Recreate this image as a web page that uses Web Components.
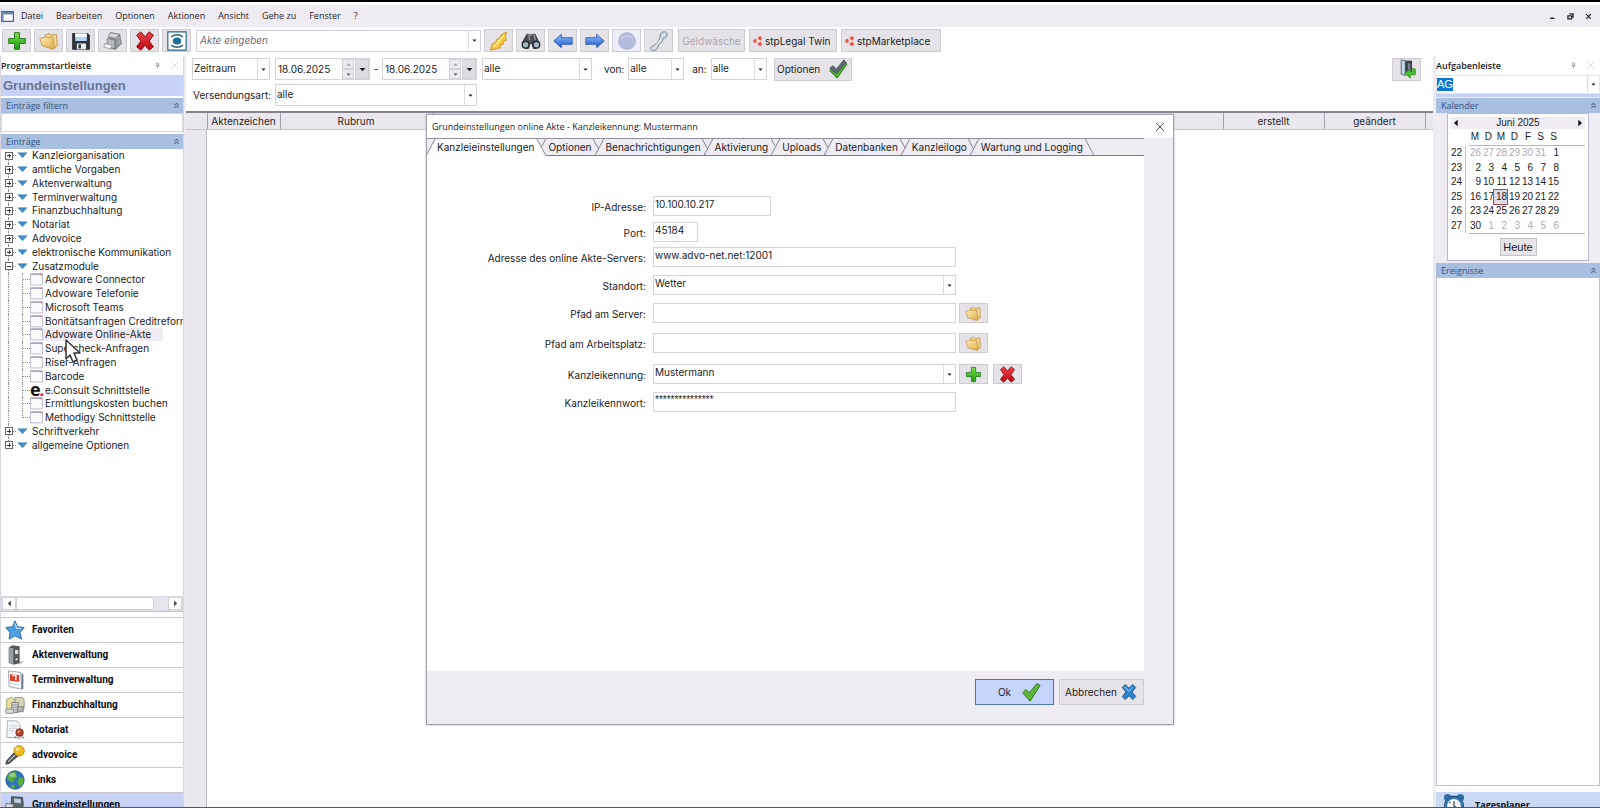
<!DOCTYPE html>
<html lang="de">
<head>
<meta charset="utf-8">
<title>Advoware – Grundeinstellungen</title>
<style>
  html, body { margin: 0; height: 100%; overflow: hidden; }
  body { font: 10px/14px Inter, "Liberation Sans", sans-serif; color: #1c1c24; background: #fff; }
</style>
</head>
<body>
<app-window></app-window>

<script>
const BASE = `
  *, *::before, *::after { box-sizing: border-box; }
  button, input, select { font: inherit; color: inherit; margin: 0; padding: 0; border-radius: 0; outline: 0; }
  button { cursor: pointer; }
`;

const define = (name, css, html, setup) => {
  customElements.define(name, class extends HTMLElement {
    constructor() {
      super();
      this.attachShadow({ mode: 'open' });
    }
    connectedCallback() {
      if (this.shadowRoot.firstChild) return;
      const t = document.createElement('template');
      t.innerHTML = `<style>${BASE}${css}</style>` + (typeof html === 'function' ? html(this) : html);
      this.shadowRoot.append(t.content.cloneNode(true));
      if (setup) setup(this, this.shadowRoot);
    }
  });
};

/* ---------- icons (24 x 24 grid) ---------- */
const ICONS = {
  plus: `<defs><linearGradient id="g" x2="0" y2="1"><stop stop-color="#7be04a"/><stop offset="1" stop-color="#1d9a12"/></linearGradient></defs><path d="M9 2h6v7h7v6h-7v7H9v-7H2V9h7z" fill="url(#g)" stroke="#2f7d22" stroke-width="1.2" stroke-linejoin="round"/>`,
  folder: `<defs><linearGradient id="g" x2="1" y2="1"><stop stop-color="#fff0b8"/><stop offset="1" stop-color="#e0a940"/></linearGradient></defs><path d="M7 5l5-2 3 2 6-1 1 14-6 3z" fill="#f3d58c" stroke="#b58a3c" stroke-width=".9"/><path d="M1 9l8-2 2 1 5-1 3 13-2 2-13-4z" fill="url(#g)" stroke="#b58a3c" stroke-width=".9" stroke-linejoin="round"/>`,
  save: `<path d="M2 3h18l2 2v17H2z" fill="#2f333b" stroke="#1d2026"/><path d="M5 3h14v9H5z" fill="#b9d3ee"/><path d="M5 3h14v4H5z" fill="#f8fbff"/><path d="M7 15h11v7H7z" fill="#e9ebef"/><path d="M9 16h3v5H9z" fill="#30343c"/>`,
  printer: `<path d="M9 2l11 2 2 11-7 7-5-1V10L7 8z" fill="#8b8e92" stroke="#55585c" stroke-width=".8"/><path d="M9 2l11 2-5 5-9-2z" fill="#d4d6d9" stroke="#6a6d70" stroke-width=".7"/><path d="M5 9l9 2v10l-9-2z" fill="#b9bcc0" stroke="#65686c" stroke-width=".7"/><path d="M2 15l9 2-2 5-8-3z" fill="#f4f4f4" stroke="#777" stroke-width=".7"/><path d="M17 10l3-3m-3 7l4-4m-4 7l4-4" stroke="#ddd"/>`,
  cross: `<defs><linearGradient id="g" x2="0" y2="1"><stop stop-color="#f04448"/><stop offset="1" stop-color="#b80814"/></linearGradient></defs><path d="M2 5l5-4 5 6 5-6 5 4-5 7 5 7-5 4-5-6-5 6-5-4 5-7z" fill="url(#g)" stroke="#8f1219" stroke-width="1.2" stroke-linejoin="round"/>`,
  view: `<path d="M1 1h22v22H1z" fill="#fff" stroke="#2a6484" stroke-width="1.4"/><path d="M5 7q7-5 14 0M5 17q7 5 14 0" fill="none" stroke="#2a6484" stroke-width="2"/><ellipse cx="12" cy="12" rx="5" ry="4.200" fill="#1d6d98"/>`,
  bolt: `<path d="M21 1l-7 4-1 4-4 1-1 4-4 1-2 8 8-2 4-1-1-3 4-1 1-4 3-1-1-4z" fill="#f8c73c" stroke="#b8882a" stroke-width=".9" stroke-linejoin="round"/><path d="M18 5l-6 7-6 7" stroke="#fff0a8" fill="none" stroke-width="1.5"/>`,
  binoculars: `<path d="M7 4h4v3h2V4h4l5 11-4 6h-3l-2-6h-2l-2 6H5l-4-6z" fill="#4b5056" stroke="#2b2e32"/><path d="M8 5h2v6M14 5h2l1 6" stroke="#9ba0a6" fill="none" stroke-width="1.5"/><circle cx="5.500" cy="16.500" r="4" fill="#9db8c2" stroke="#222" stroke-width="1.4"/><circle cx="18.500" cy="16.500" r="4" fill="#9db8c2" stroke="#222" stroke-width="1.4"/>`,
  left: `<defs><linearGradient id="g" x2="0" y2="1"><stop stop-color="#8fc0ff"/><stop offset="1" stop-color="#1b57cf"/></linearGradient></defs><path d="M1 12l9-8v4h13v8H10v4z" fill="url(#g)" stroke="#2a55a8" stroke-linejoin="round"/>`,
  right: `<defs><linearGradient id="g" x2="0" y2="1"><stop stop-color="#8fc0ff"/><stop offset="1" stop-color="#1b57cf"/></linearGradient></defs><path d="M23 12l-9-8v4H1v8h13v4z" fill="url(#g)" stroke="#2a55a8" stroke-linejoin="round"/>`,
  disc: `<circle cx="12" cy="12" r="10" fill="#b3bbdc" stroke="#a3aac6"/><path d="M5 9q7-6 14 0" stroke="#c9cfe8" fill="none" stroke-width="2"/>`,
  phone: `<path d="M17 1c5-1 6 5 3 7-2 1-2 0-3 1-1 4-3 6-6 8 0 3-1 5-4 6-4 1-6-1-5-3 1-2 3-1 4-3 4-2 6-5 7-9 0-3 1-6 4-7z" fill="#d3dfe6" stroke="#6f7f8b" stroke-width="1.2"/><path d="M14 10q-3 5-7 8" stroke="#fff" fill="none" stroke-width="1.2"/>`,
  stp: `<circle cx="12" cy="12" r="7" fill="none" stroke="#ef5545" stroke-width="4" stroke-dasharray="9 5.660" stroke-dashoffset="12"/><circle cx="4.500" cy="12" r="4.400" fill="#ef5545"/><circle cx="17" cy="4.500" r="4.200" fill="#ef5545"/><circle cx="17" cy="19.500" r="4.200" fill="#ef5545"/>`,
  check: `<path d="M2 13l4-4 4 4 9-11 4 2-12 19z" fill="#5db634" stroke="#2e6b1d" stroke-width="1.1" stroke-linejoin="round"/>`,
  checkdark: `<path d="M2 14l4-4 4 4 9-10 4 2-12 17z" fill="#54b330" stroke="#2f7320" stroke-width="1.1" stroke-linejoin="round"/><path d="M2 11l4-3 4 4 9-11 3 3-12 14z" fill="#5d6c72" stroke="#3d484d" stroke-width=".8"/>`,
  bluex: `<path d="M3 6l4-4 5 5 5-5 4 4-5 6 5 6-4 4-5-5-5 5-4-4 5-6z" fill="#2b86cf" stroke="#174f80" stroke-width="1.2" stroke-linejoin="round"/><path d="M6 5l6 6 5-6" stroke="#7cc0f0" fill="none" stroke-width="1.5"/>`,
  exit: `<path d="M5 1l5 1v18l-5-2z" fill="#b9d6ea" stroke="#555"/><path d="M10 2h8v14h-8z" fill="#3a3f46"/><path d="M13 5h3v9h-3z" fill="#777e86"/><path d="M22 12v7h-6v4l-7-6 7-5v3h3v-4z" fill="#45c02c" stroke="#2c7c1c" stroke-width=".8"/>`,
  star: `<path d="M12 1l3 7 8 1-5 6 2 8-8-4-7 4 1-8-5-6 8-1z" fill="#4c9fe0" stroke="#235f97" stroke-linejoin="round"/><path d="M12 4l2 6 5 0" stroke="#b9dcf8" stroke-width="1.5" fill="none"/>`,
  binder: `<path d="M18 20l5-1-4 4h-9z" fill="#bbb"/><path d="M5 3l4-2 8 1v19l-7 2-5-2z" fill="#55595d" stroke="#33363a" stroke-width=".8"/><path d="M5 3l5 1v19l-5-2z" fill="#9da1a5"/><path d="M12 6h4v5h-4z" fill="#dcdcdc"/><circle cx="14" cy="17" r="1.500" fill="#ccc"/>`,
  cal: `<path d="M4 1l15 2 1 20-15-3z" fill="#f7f9fc" stroke="#8f9aa8"/><path d="M20 4l2 1v18h-2z" fill="#6e7884"/><path d="M6 5l11 1v8L6 13z" fill="#d8422c"/><path d="M9 7l4-1v6" stroke="#fff" stroke-width="1.600" fill="none"/><path d="M6 16l11 2" stroke="#bcd"/>`,
  finance: `<path d="M2 5l6-2 3 2v11l-5 2-4-2z" fill="#e9dfa0" stroke="#99916a"/><path d="M12 3h9l2 3v10H12z" fill="#d8d4b4" stroke="#888"/><path d="M8 9h8v12H8z" fill="#cfd1d4" stroke="#777"/><path d="M8 12h8m-8 3h8m-8 3h8" stroke="#8a8d90"/><path d="M1 17h9v5H1z" fill="#d9dbdd" stroke="#888"/><path d="M15 14h7v6h-7z" fill="#b3b5b8" stroke="#777"/>`,
  notary: `<path d="M3 1h11l4 4v16H2z" fill="#f4f5f8" stroke="#9fa3ac"/><path d="M5 7h10M5 10h10M5 13h6" stroke="#bfc4cc"/><path d="M14 18l-3 4 4-1 2 2 2-2 4 1-3-4z" fill="#d8d8e2" stroke="#6b6b7c" stroke-width=".7"/><circle cx="17.500" cy="15" r="4.500" fill="#b3432f" stroke="#7b2a1d"/><circle cx="16.500" cy="14" r="1.600" fill="#e08a70"/>`,
  mic: `<path d="M11 9l5 4L5 22l-4 1 1-4z" fill="#4e5358" stroke="#2f3337"/><path d="M12 12l-8 8" stroke="#c5c9cc" stroke-width="1.5"/><circle cx="17" cy="7" r="6.200" fill="#f2bd14" stroke="#a87c08"/><circle cx="15" cy="5" r="2.200" fill="#fbe48b"/>`,
  globe: `<circle cx="12" cy="12" r="11" fill="#2f73bf" stroke="#254f86"/><path d="M3 7c4-5 8-6 11-4l-2 3 3 1-3 4-3-1 2 4-3 1-5-4zM17 8l5 2v6l-4 4-3-5zM8 17l4 2-1 4-4-2z" fill="#58b03c"/><ellipse cx="9" cy="6" rx="4" ry="2.500" fill="#fff" opacity=".35"/>`,
  settings: `<path d="M8 2l13 1 1 10-5 5-10-3z" fill="#5d666f" stroke="#343a40"/><path d="M11 4l8 1v5l-8-1z" fill="#bcd0dd"/><path d="M1 10l9 1v9l-9-1z" fill="#d9dcdf" stroke="#666"/><path d="M2 18h18v4H2z" fill="#8d949a"/>`,
  clock: `<circle cx="5" cy="4" r="4" fill="#2f6fa8"/><circle cx="19" cy="4" r="4" fill="#2f6fa8"/><path d="M8 3h8" stroke="#1e4b75" stroke-width="2"/><circle cx="12" cy="13" r="10.500" fill="#3979b2" stroke="#1e4b75"/><circle cx="12" cy="13" r="7.500" fill="#f3f8fc"/><path d="M12 8v5l4 3M7 9l1 1" stroke="#345" stroke-width="1.400" fill="none"/>`,
  form: `<path d="M1 2h22v20H1z" fill="#fbfbfd" stroke="#b4b6c6" stroke-width="1.6"/><path d="M1 2h22" stroke="#9a9db6" stroke-width="2.500"/><path d="M19 3h3" stroke="#d98080" stroke-width="2"/>`,
  triangle: `<path d="M2 6h20l-10 11z" fill="#3f8fd0" stroke="#2c6da8"/>`,
  app: `<path d="M1 3h22v18H1z" fill="#fff" stroke="#3d5f98" stroke-width="2.500"/><path d="M1 4h22v4H1z" fill="#5b7db6"/><path d="M1 4h4v17H1z" fill="#7d97c4"/>`,
  pin: `<path d="M8 3h8v10H8zM5 14h14M12 14v8" fill="none" stroke="#8d8b95" stroke-width="2"/><path d="M13 4h3v9h-3z" fill="#8d8b95"/>`,
  close: `<path d="M3 3l18 18M21 3L3 21" stroke="currentColor" stroke-width="2" fill="none"/>`,
  min: `<path d="M4 18h14" stroke="#222" stroke-width="5"/>`,
  restore: `<path d="M8 3h13v11h-4M3 10h13v10H3z" fill="none" stroke="#222" stroke-width="4"/>`,
  closebold: `<path d="M4 4l16 16M20 4L4 20" stroke="#222" stroke-width="4" fill="none"/>`,
  chevrons: `<path d="M5 11l7-7 7 7M5 20l7-7 7 7" fill="none" stroke="#22304c" stroke-width="3"/>`,
  down: `<path d="M2 7h20L12 18z" fill="#1a1a22"/>`,
  up: `<path d="M2 17h20L12 6z" fill="#77757f"/>`,
  prev: `<path d="M17 2v20L6 12z" fill="#111"/>`,
  next: `<path d="M7 2v20l11-10z" fill="#111"/>`
};
define('ui-icon', `:host { display: block; flex: none; width: 20px; height: 20px; } svg { display: block; width: 100%; height: 100%; }`,
  el => `<svg viewBox="0 0 24 24" aria-hidden="true">${ICONS[el.getAttribute('name')]}</svg>`);

/* ---------- buttons ---------- */
define('tool-button', `
  :host { display: block; flex: none; width: 29px; height: 23px; }
  button { width: 100%; height: 100%; display: flex; align-items: center; justify-content: center; gap: 2px; background: #e6e3e8; border: 1px solid #cfccd4; white-space: nowrap; }
  :host([soft]) button { background: #eeedf8; }
  :host([disabled]) button { color: #a9a6b0; }
  :host([start]) button { justify-content: flex-start; padding-left: 3px; }
  :host([primary]) button { background: #c5d4fa; border: 1px solid #4a74ac; padding-left: 10px; }
`, el => `<button aria-label="${el.getAttribute('label') || ''}"><slot></slot></button>`,
  (el, r) => { if (!el.getAttribute('label')) r.querySelector('button').removeAttribute('aria-label'); });

/* ---------- drop-down ---------- */
define('combo-box', `
  :host { display: block; flex: none; height: 22px; position: relative; background: #fff; border: 1px solid #d6d3dc; }
  select { appearance: none; display: block; width: 100%; height: 100%; border: 0; background: transparent; padding: 0 14px 3px 1px; }
  .mark { position: absolute; right: 0; top: 0; bottom: 0; width: 12px; border-left: 1px solid #dddae2; display: flex; align-items: center; justify-content: center; pointer-events: none; }
  ui-icon { width: 5px; height: 5px; }
`, el => `<select aria-label="${el.getAttribute('label')}"><option>${el.getAttribute('value')}</option></select><span class="mark"><ui-icon name="down"></ui-icon></span>`);

define('edit-combo', `
  :host { display: flex; flex: none; height: 22px; background: #fff; border: 1px solid #d6d3dc; }
  input { flex: 1; min-width: 0; border: 0; background: transparent; padding: 0 3px 2px; }
  input::placeholder { color: #6d6b75; font-style: italic; opacity: 1; }
  :host([marked]) { align-items: center; justify-content: space-between; border-color: #e6e3ea; }
  :host([marked]) input { flex: none; width: 16px; height: 13px; padding: 0; background: #0a78d6; color: #fff; font: 11px/13px "Liberation Sans", sans-serif; }
  button { width: 12px; height: 100%; border: 0; border-left: 1px solid #dddae2; background: transparent; display: flex; align-items: center; justify-content: center; }
  ui-icon { width: 5px; height: 5px; }
`, el => `<input aria-label="${el.getAttribute('label')}" value="${el.getAttribute('value') || ''}" placeholder="${el.getAttribute('placeholder') || ''}"><button aria-label="Liste öffnen"><ui-icon name="down"></ui-icon></button>`);

define('date-box', `
  :host { display: flex; flex: none; width: 95px; height: 22px; border: 1px solid #d6d3dc; background: #fff; }
  input { flex: 1; min-width: 0; border: 0; padding: 0 0 0 2px; background: transparent; }
  .spin { width: 12px; display: grid; grid-template-rows: 1fr 1fr; }
  button { border: 1px solid #d3d0d8; background: #eeebf0; display: flex; align-items: center; justify-content: center; min-height: 0; }
  .spin ui-icon { width: 5px; height: 5px; opacity: .7; }
  .drop { width: 14px; margin-left: 1px; background: #dedbe2; }
  .drop ui-icon { width: 7px; height: 7px; }
`, el => `<input aria-label="${el.getAttribute('label')}" value="18.06.2025"><div class="spin"><button aria-label="Später"><ui-icon name="up"></ui-icon></button><button aria-label="Früher"><ui-icon name="down"></ui-icon></button></div><button class="drop" aria-label="Kalender"><ui-icon name="down"></ui-icon></button>`);

/* ---------- menu bar and toolbar ---------- */
define('menu-bar', `
  :host { display: flex; align-items: center; height: 22px; margin-top: 3px; background: #efebf3; padding: 0 8px 0 1px; font: 9px/12px "Open Sans", sans-serif; }
  nav { display: flex; gap: 13px; margin-left: 7px; }
  nav button, .win button { border: 0; background: transparent; }
  .app { width: 13px; height: 13px; }
  .win { margin-left: auto; display: flex; gap: 11px; }
  .win ui-icon { width: 7px; height: 7px; }
`, `<ui-icon class="app" name="app"></ui-icon>
  <nav>${['Datei','Bearbeiten','Optionen','Aktionen','Ansicht','Gehe zu','Fenster','?'].map(t => `<button>${t}</button>`).join('')}</nav>
  <div class="win"><button aria-label="Minimieren"><ui-icon name="min"></ui-icon></button><button aria-label="Wiederherstellen"><ui-icon name="restore"></ui-icon></button><button aria-label="Schließen"><ui-icon name="closebold"></ui-icon></button></div>`);

define('tool-bar', `
  :host { display: flex; align-items: center; height: 29px; gap: 3px; padding: 0 2px 2px; }
  edit-combo { width: 285px; margin-left: 2px; }
  .money { width: 67px; margin-left: 2px; } .twin { width: 88px; margin-left: 1px; } .market { width: 100px; margin-left: 1px; }
  .stp { width: 10px; height: 10px; }
`, `${[['plus','Neu'],['folder','Öffnen'],['save','Speichern'],['printer','Drucken'],['cross','Löschen'],['view','Ansicht']].map(([i, l]) => `<tool-button label="${l}"><ui-icon name="${i}"></ui-icon></tool-button>`).join('')}
  <edit-combo label="Akte" placeholder="Akte eingeben"></edit-combo>
  ${[['bolt','Schnellzugriff'],['binoculars','Suchen'],['left','Zurück'],['right','Vor'],['disc','Status'],['phone','Anrufen']].map(([i, l]) => `<tool-button label="${l}" ${i === 'disc' ? 'soft' : ''}><ui-icon name="${i}"></ui-icon></tool-button>`).join('')}
  <tool-button class="money" disabled>Geldwäsche</tool-button>
  <tool-button class="twin" start><ui-icon class="stp" name="stp"></ui-icon>stpLegal Twin</tool-button>
  <tool-button class="market" start><ui-icon class="stp" name="stp"></ui-icon>stpMarketplace</tool-button>`);

/* ---------- side panels ---------- */
define('panel-title', `
  :host { display: flex; align-items: center; height: 19px; padding: 0 5px 0 0; font: 600 9px/14px "Open Sans", sans-serif; }
  .pin { width: 7px; height: 7px; margin-left: auto; }
  .x { width: 7px; height: 7px; margin-left: 10px; color: #bbb8c2; }
`, `<slot></slot><ui-icon class="pin" name="pin"></ui-icon><ui-icon class="x" name="close"></ui-icon>`);

define('section-bar', `
  :host { display: flex; align-items: center; justify-content: space-between; height: 15px; padding: 0 3px 0 5px; background: #a9bfe1; color: #33517e; font: 9px/14px "Open Sans", sans-serif; }
  ui-icon { width: 7px; height: 7px; }
`, `<slot></slot><ui-icon name="chevrons"></ui-icon>`);

define('tree-item', `
  :host { display: flex; align-items: center; position: relative; padding-left: 4px; min-height: 0; white-space: nowrap; }
  .line { position: absolute; left: 7px; top: 0; bottom: 0; border-left: 1px dotted #8d8b95; }
  :host([first]) .line { top: 50%; }
  :host([last]) .line { bottom: 50%; }
  .box { width: 8px; height: 8px; border: 1px solid #66646e; background: linear-gradient(#33313a, #33313a) center / 4px 1px no-repeat #fff; position: relative; }
  .box.plus { background: linear-gradient(#33313a, #33313a) center / 4px 1px no-repeat, linear-gradient(#33313a, #33313a) center / 1px 4px no-repeat #fff; }
  .dash { width: 3px; border-top: 1px dotted #8d8b95; }
  .tri { width: 11px; height: 11px; margin: 0 4px 0 1px; }
  .sub { position: absolute; left: 21px; top: 0; bottom: 0; border-left: 1px dotted #8d8b95; }
  :host([end]) .sub { bottom: 50%; }
  .arm { width: 7px; border-top: 1px dotted #8d8b95; margin-left: 18px; }
  .leaf { width: 13px; height: 13px; }
  .e { width: 13px; font: bold 18px/10px "Open Sans", sans-serif; color: #111; display: flex; align-items: baseline; }
  .e b { color: #d0203c; font-size: 14px; margin-left: -1px; }
  .text { line-height: 13px; }
  :host([leaf]) .text { padding: 0 12px 0 2px; }
  :host([hover]) .text { background: #f0ecf3; }
`, el => el.hasAttribute('leaf')
    ? `<i class="line"></i><i class="sub"></i><i class="arm"></i>${el.hasAttribute('consult') ? '<span class="e" aria-hidden="true">e<b>.</b></span>' : '<ui-icon class="leaf" name="form"></ui-icon>'}<span class="text"><slot></slot></span>`
    : `<i class="line"></i><i class="box ${el.hasAttribute('open') ? '' : 'plus'}"></i><i class="dash"></i><ui-icon class="tri" name="triangle"></ui-icon><span class="text"><slot></slot></span>`);

define('nav-item', `
  :host { display: block; flex: none; height: 25px; border-top: 1px solid #cbc8d2; }
  button { display: flex; align-items: center; width: 100%; height: 24px; border: 0; padding: 0 0 0 4px; gap: 7px; background: #fff; text-align: left; font: bold 10px/14px Roboto, sans-serif; color: #0c0c12; }
  :host([active]) button { background: #c6d3f7; }
  :host([wide]) { border: 0; height: 25px; }
  :host([wide]) button { background: #c9d8f3; height: 25px; gap: 10px; padding-left: 7px; font: bold 9px/14px "Open Sans", sans-serif; }
  ui-icon { width: 20px; height: 20px; }
  :host([wide]) ui-icon { width: 22px; height: 22px; }
`, el => `<button><ui-icon name="${el.getAttribute('icon')}"></ui-icon><slot></slot></button>`);

define('start-panel', `
  :host { display: flex; flex-direction: column; min-width: 0; min-height: 0; border-right: 1px solid #d9d6e0; border-left: 1px solid #d9d6e0; position: relative; }
  h1 { margin: 0; height: 21px; background: #c6d2f8; color: #66758f; font: bold 13px/21px "Liberation Sans", sans-serif; padding-left: 2px; }
  section-bar { flex: none; margin-top: 2px; }
  .filter { height: 19px; border: 1px solid #d9d6e0; }
  .tree { flex: 1; min-height: 0; overflow: hidden; }
  .rows { display: grid; grid-auto-rows: 1fr; height: 303px; }
  .scroll { height: 15px; display: flex; background: #e8e6ec; border: 1px solid #dddae3; }
  .scroll button { width: 14px; border: 1px solid #d3d0da; background: #fff; display: flex; align-items: center; justify-content: center; }
  .scroll ui-icon { width: 7px; height: 7px; opacity: .75; }
  .thumb { width: 138px; background: #fff; border: 1px solid #d3d0da; margin-right: auto; }
  .rule { height: 6px; border-top: 1px solid #cbc8d2; flex: none; }
  .nav { flex: none; height: 190px; overflow: hidden; }
  .pointer { position: absolute; left: 62px; top: 282px; width: 19px; height: 26px; }
`, `<panel-title>Programmstartleiste</panel-title>
  <h1>Grundeinstellungen</h1>
  <section-bar>Einträge filtern</section-bar>
  <input class="filter" aria-label="Einträge filtern">
  <section-bar>Einträge</section-bar>
  <div class="tree"><div class="rows" role="tree">
    <tree-item first>Kanzleiorganisation</tree-item><tree-item>amtliche Vorgaben</tree-item><tree-item>Aktenverwaltung</tree-item><tree-item>Terminverwaltung</tree-item><tree-item>Finanzbuchhaltung</tree-item><tree-item>Notariat</tree-item><tree-item>Advovoice</tree-item><tree-item>elektronische Kommunikation</tree-item><tree-item open>Zusatzmodule</tree-item>
    <tree-item leaf>Advoware Connector</tree-item><tree-item leaf>Advoware Telefonie</tree-item><tree-item leaf>Microsoft Teams</tree-item><tree-item leaf>Bonitätsanfragen Creditreform</tree-item><tree-item leaf hover>Advoware Online-Akte</tree-item><tree-item leaf>Supercheck-Anfragen</tree-item><tree-item leaf>Riser-Anfragen</tree-item><tree-item leaf>Barcode</tree-item><tree-item leaf consult>e.Consult Schnittstelle</tree-item><tree-item leaf>Ermittlungskosten buchen</tree-item><tree-item leaf end>Methodigy Schnittstelle</tree-item>
    <tree-item>Schriftverkehr</tree-item><tree-item last>allgemeine Optionen</tree-item>
  </div></div>
  <div class="scroll"><button aria-label="Nach links"><ui-icon name="prev"></ui-icon></button><div class="thumb"></div><button aria-label="Nach rechts"><ui-icon name="next"></ui-icon></button></div>
  <div class="rule"></div>
  <div class="nav">
    <nav-item icon="star">Favoriten</nav-item><nav-item icon="binder">Aktenverwaltung</nav-item><nav-item icon="cal">Terminverwaltung</nav-item><nav-item icon="finance">Finanzbuchhaltung</nav-item><nav-item icon="notary">Notariat</nav-item><nav-item icon="mic">advovoice</nav-item><nav-item icon="globe">Links</nav-item><nav-item icon="settings" active>Grundeinstellungen</nav-item>
  </div>
  <svg class="pointer" viewBox="0 0 19 26" aria-hidden="true"><path d="M3 2v19l4-4 3 7 4-2-3-7h6z" fill="#fff" stroke="#33333c" stroke-width="1.500" stroke-linejoin="round"/></svg>`,
  (el, r) => r.querySelectorAll('tree-item').forEach(i => i.setAttribute('role', 'treeitem')));

define('month-calendar', `
  :host { display: block; width: 142px; height: 148px; margin: 0 auto; padding: 3px; background: #fff; border: 1px solid #b9b8d2; font: 10px/12px "Liberation Sans", sans-serif; }
  header { display: flex; align-items: center; justify-content: space-between; height: 12px; background: #efecf3; padding: 0 1px; }
  header button { border: 0; background: transparent; }
  header ui-icon { width: 8px; height: 8px; }
  table { border-collapse: collapse; table-layout: fixed; width: 108px; }
  .grid { height: 87px; }
  thead tr { height: 16px; }
  th, td { padding: 0; text-align: right; font-weight: normal; width: 13px; line-height: 12px; }
  thead th { padding-right: 2px; }
  th:first-child { width: 14px; text-align: left; }
  td:nth-child(2), thead th:nth-child(2) { width: 16px; }
  tbody th { border-right: 1px solid #c5c3cb; }
  .off { color: #aeacb4; }
  .today { background: #dcdce8; outline: 1px solid #b04850; }
  .foot { display: flex; justify-content: center; padding-top: 4px; }
  .foot button { width: 37px; height: 18px; background: #e8e5ea; border: 1px solid #c4c1ca; font-size: 11px; }
  .line { height: 1px; margin-left: 18px; background: #b5b3bb; }
`, () => {
    let n = 26, month = 0, rows = '';
    for (let w = 22; w < 28; w++) {
      rows += `<tr><th>${w}</th>`;
      for (let i = 0; i < 7; i++) {
        rows += `<td class="${month === 1 ? (n === 18 ? 'today' : '') : 'off'}">${n}</td>`;
        n++;
        if (month === 0 && n === 32) { n = 1; month = 1; }
        if (month === 1 && n === 31) { n = 1; month = 2; }
      }
      rows += '</tr>';
    }
    return `<header><button aria-label="Vorheriger Monat"><ui-icon name="prev"></ui-icon></button><span>Juni 2025</span><button aria-label="Nächster Monat"><ui-icon name="next"></ui-icon></button></header>
    <table><thead><tr><th></th>${[...'MDMDFSS'].map(d => `<th>${d}</th>`).join('')}</tr></thead></table>
    <div class="line"></div>
    <table class="grid"><tbody>${rows}</tbody></table>
    <div class="line"></div>
    <div class="foot"><button>Heute</button></div>`;
  });

define('task-panel', `
  :host { display: flex; flex-direction: column; min-width: 0; min-height: 0; background: #efecf4; }
  panel-title { background: #fff; flex: none; padding-right: 6px; }
  edit-combo { height: 19px; }
  .strip { height: 3px; background: #c6cff8; margin-bottom: 1px; flex: none; }
  section-bar { flex: none; }
  .cal { height: 150px; flex: none; }
  .events { flex: 1; background: #fff; border: 1px solid #c5c2cc; border-top: 0; }
  .next { flex: none; height: 21px; overflow: hidden; padding-top: 6px; background: linear-gradient(#fff, #fff) 0 0 / 100% 6px no-repeat; }
`, `<panel-title>Aufgabenleiste</panel-title>
  <edit-combo marked label="Bearbeiter" value="AG"></edit-combo>
  <div class="strip"></div>
  <section-bar>Kalender</section-bar>
  <div class="cal"><month-calendar></month-calendar></div>
  <section-bar>Ereignisse</section-bar>
  <div class="events"></div>
  <div class="next"><nav-item wide icon="clock">Tagesplaner</nav-item></div>`);

/* ---------- centre ---------- */
define('work-area', `
  :host { display: flex; flex-direction: column; min-width: 0; min-height: 0; border-left: 2px solid #eeeaf2; border-right: 3px solid #eeeaf2; }
  .filters { display: flex; align-items: center; height: 24px; padding: 0 12px 0 6px; margin-top: 1px; }
  .filters.second { margin: 2px 0 4px; height: 24px; }
  .period { width: 78px; margin-right: 5px; } .kind { width: 110px; margin-left: 5px; }
  .dash { width: 12px; text-align: center; }
  .by { margin: 0 4px 0 12px; } .to { margin: 0 4px 0 8px; }
  .person { width: 56px; }
  .opt { width: 78px; margin-left: 7px; }
  .opt ui-icon { width: 20px; height: 20px; margin-left: 6px; }
  .leave { margin-left: auto; }
  .send { width: 83px; padding-left: 1px; }
  .dispatch { width: 202px; }
  table { border-collapse: collapse; width: 100%; table-layout: fixed; flex: none; border-top: 2px solid #85828e; }
  th { height: 17px; padding: 0; background: #ebe7ee; font-weight: normal; line-height: 14px; border-bottom: 1px solid #c3c0ca; border-right: 1px solid #a3a0ac; }
  th:last-child { border-right: 0; }
  .body { flex: 1; width: 21px; background: #ebe7ee; border-right: 1px solid #bdbac5; }
`, `<div class="filters"><combo-box class="period" label="Zeitraum" value="Zeitraum"></combo-box><date-box label="Datum von"></date-box><span class="dash">-</span><date-box label="Datum bis"></date-box>
    <combo-box class="kind" label="Art" value="alle"></combo-box><span class="by">von:</span><combo-box class="person" label="von" value="alle"></combo-box><span class="to">an:</span><combo-box class="person" label="an" value="alle"></combo-box>
    <tool-button class="opt">Optionen<ui-icon name="checkdark"></ui-icon></tool-button><tool-button class="leave" label="Verlassen"><ui-icon name="exit"></ui-icon></tool-button></div>
  <div class="filters second"><span class="send">Versendungsart:</span><combo-box class="dispatch" label="Versendungsart" value="alle"></combo-box></div>
  <table><colgroup><col style="width:21px"><col style="width:73px"><col style="width:152px"><col><col style="width:101px"><col style="width:101px"><col style="width:8px"></colgroup>
    <thead><tr><th></th><th>Aktenzeichen</th><th>Rubrum</th><th></th><th>erstellt</th><th>geändert</th><th></th></tr></thead></table>
  <div class="body"></div>`);

/* ---------- dialog ---------- */
define('tab-strip', `
  :host { display: flex; flex: none; height: 18px; background: #efecf4; border-top: 1px solid #8f8d98; border-bottom: 1px solid #7d7b87; padding-left: 3px; }
  button { position: relative; height: 17px; border: 0; background: transparent; padding: 0 7px 2px; white-space: nowrap; line-height: 14px; isolation: isolate; }
  button::before, button::after { content: ""; position: absolute; z-index: -1; top: 0; height: 16px; background: #efecf4; }
  button::before { left: 0; right: 50%; transform: skewX(-28deg); border-left: 1px solid #85838f; }
  button::after { left: 40%; right: 0; transform: skewX(28deg); border-right: 1px solid #85838f; }
  button[aria-selected=true] { z-index: 2; }
  button[aria-selected=true]::before, button[aria-selected=true]::after { background: #fff; height: 17px; }
`, `${['Kanzleieinstellungen','Optionen','Benachrichtigungen','Aktivierung','Uploads','Datenbanken','Kanzleilogo','Wartung und Logging'].map((t, i) => `<button role="tab" aria-selected="${!i}">${t}</button>`).join('')}`,
  el => el.setAttribute('role', 'tablist'));

define('form-field', `
  :host { display: flex; align-items: flex-start; }
  label { flex: none; width: 219px; text-align: right; margin-right: 7px; padding-top: 4px; }
  .control { display: flex; position: relative; width: 303px; height: 20px; flex: none; border: 1px solid #d6d3dc; background: #fff; }
  :host([size=m]) .control { width: 118px; } :host([size=s]) .control { width: 45px; }
  input, select { appearance: none; flex: 1; min-width: 0; border: 0; background: transparent; padding: 0 0 4px 1px; line-height: 14px; }
  .mark { position: absolute; right: 0; top: 0; bottom: 0; width: 12px; border-left: 1px solid #dddae2; display: flex; align-items: center; justify-content: center; pointer-events: none; }
  .mark ui-icon { width: 5px; height: 5px; }
  :host([stars]) input { font-family: "Liberation Sans", sans-serif; }
  .extra { display: flex; gap: 5px; margin-left: 3px; }
`, el => {
    const v = el.getAttribute('value') || '';
    const c = el.hasAttribute('list') ? `<select id="c"><option>${v}</option></select><span class="mark"><ui-icon name="down"></ui-icon></span>` : `<input id="c" value="${v}">`;
    return `<label for="c">${el.getAttribute('label')}</label><span class="control">${c}</span><span class="extra"><slot></slot></span>`;
  });

define('settings-dialog', `
  :host { display: flex; flex-direction: column; background: #efedf3; border: 1px solid #a19fa9; box-shadow: 0 0 2px #b5b3bd; }
  header { display: flex; align-items: center; justify-content: space-between; flex: none; height: 23px; background: #fff; padding: 0 8px 0 5px; font: 9px/14px "Open Sans", sans-serif; }
  h2 { margin: 0; font: inherit; }
  header button { border: 0; background: transparent; width: 10px; height: 10px; }
  header ui-icon { width: 10px; height: 10px; }
  .page { flex: 1; display: flex; flex-direction: column; margin-right: 29px; background: #fff; }
  form { display: grid; grid-template-rows: 26px 25px 28px 28px 30px 31px 28px 21px; padding-top: 40px; }
  form tool-button { height: 20px; }
  form ui-icon { width: 17px; height: 17px; }
  footer { display: flex; justify-content: flex-end; gap: 5px; padding: 8px 29px 19px; flex: none; }
  footer tool-button { width: 79px; height: 26px; }
  footer .no { width: 85px; }
  .ok ui-icon { margin-left: 8px; }
  .no ui-icon { width: 18px; height: 18px; margin-left: 1px; }
`, `<header><h2>Grundeinstellungen online Akte - Kanzleikennung: Mustermann</h2><button aria-label="Schließen"><ui-icon name="close"></ui-icon></button></header>
  <div class="page"><tab-strip></tab-strip>
  <form>
    <form-field size="m" label="IP-Adresse:" value="10.100.10.217"></form-field>
    <form-field size="s" label="Port:" value="45184"></form-field>
    <form-field label="Adresse des online Akte-Servers:" value="www.advo-net.net:12001"></form-field>
    <form-field list label="Standort:" value="Wetter"></form-field>
    <form-field label="Pfad am Server:"><tool-button label="Durchsuchen"><ui-icon name="folder"></ui-icon></tool-button></form-field>
    <form-field label="Pfad am Arbeitsplatz:"><tool-button label="Durchsuchen"><ui-icon name="folder"></ui-icon></tool-button></form-field>
    <form-field list label="Kanzleikennung:" value="Mustermann"><tool-button label="Hinzufügen"><ui-icon name="plus"></ui-icon></tool-button><tool-button label="Löschen"><ui-icon name="cross"></ui-icon></tool-button></form-field>
    <form-field stars label="Kanzleikennwort:" value="***************"></form-field>
  </form></div>
  <footer><tool-button class="ok" primary>Ok<ui-icon name="check"></ui-icon></tool-button><tool-button class="no">Abbrechen<ui-icon name="bluex"></ui-icon></tool-button></footer>`,
  el => { el.setAttribute('role', 'dialog'); });

/* ---------- window ---------- */
define('app-window', `
  :host { display: flex; flex-direction: column; box-sizing: border-box; height: 100vh; position: relative; background: #fff; border-top: 2px solid #000; border-bottom: 1px solid #55555c; overflow: hidden; }
  menu-bar, tool-bar { flex: none; }
  main { flex: 1; min-height: 0; display: grid; grid-template-columns: 184px minmax(0, 1fr) 164px; }
  settings-dialog { position: absolute; left: 426px; top: 112px; width: 748px; height: 611px; }
`, `<menu-bar></menu-bar><tool-bar></tool-bar>
  <main><start-panel></start-panel><work-area></work-area><task-panel></task-panel></main>
  <settings-dialog></settings-dialog>`);
</script>
</body>
</html>
